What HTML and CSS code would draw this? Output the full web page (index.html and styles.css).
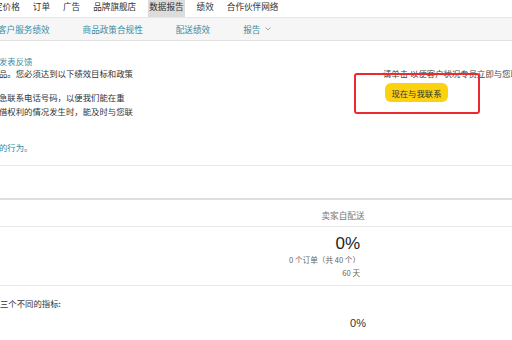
FILE: index.html
```html
<!DOCTYPE html>
<html lang="zh-CN">
<head>
<meta charset="utf-8">
<link rel="stylesheet" href="styles.css">
</head>
<body>
<nav class="topnav">
  <span>定价格</span>
  <span>订单</span>
  <span>广告</span>
  <span>品牌旗舰店</span>
  <span class="active">数据报告</span>
  <span>绩效</span>
  <span>合作伙伴网络</span>
</nav>
<nav class="subnav">
  <span>客户服务绩效</span>
  <span>商品政策合规性</span>
  <span>配送绩效</span>
  <span class="dropdown">报告
    <svg class="chev" width="6" height="4" viewBox="0 0 6 4"><path d="M0.5 0.5 L3 3 L5.5 0.5" fill="none" stroke="#999" stroke-width="0.9"/></svg>
  </span>
</nav>
<section class="main">
  <div class="left">
    <p class="link title">发表反馈</p>
    <p class="line">品。您必须达到以下绩效目标和政策</p>
    <p class="para">急联系电话号码，以便我们能在重<br>借权利的情况发生时，能及时与您联</p>
    <p class="link tail">的行为。</p>
  </div>
  <div class="right">
    <p class="hint">请单击 以便客户状况专员立即与您联系</p>
    <button class="contact">现在与我联系</button>
  </div>
  <div class="annot"></div>
</section>
<div class="filter"></div>
<div class="table">
  <div class="row head">
    <div></div>
    <div class="colhead">卖家自配送</div>
  </div>
  <div class="row vals">
    <div></div>
    <div class="valcell">
      <div class="big">0%</div>
      <div class="small">0 个订单（共 40 个）</div>
      <div class="small">60 天</div>
    </div>
  </div>
  <div class="metrics">
    <p class="mlabel">三个不同的指标:</p>
    <div class="mrow">
      <div></div>
      <div class="mval">0%</div>
    </div>
  </div>
</div>
</body>
</html>
```
FILE: styles.css
```css
html, body {
  margin: 0;
  width: 512px;
  height: 340px;
  overflow: hidden;
  background: #fff;
  font-family: "Noto Sans CJK SC", "Noto Sans", sans-serif;
  color: #333;
}
p { margin: 0; }

.topnav {
  display: flex;
  gap: 13px;
  height: 17px;
  border-bottom: 1px solid #e6e6e6;
  margin-left: -6px;
  font-size: 8.6px;
  line-height: 12px;
  white-space: nowrap;
  color: #333;
}
.topnav .active {
  background: #dcdcdc;
  margin: 0 -1px;
  padding: 0 1px;
}

.subnav {
  display: flex;
  gap: 33px;
  height: 22px;
  align-items: center;
  background: #f6f6f6;
  border-bottom: 1px solid #e2e2e2;
  margin-left: -2px;
  font-size: 8.6px;
  line-height: 12px;
  color: #3b8da3;
  white-space: nowrap;
}
.dropdown { display: flex; align-items: center; gap: 5px; }
.chev { display: block; }

.main {
  position: relative;
  display: flex;
  height: 124px;
  font-size: 8.4px;
  white-space: nowrap;
}
.left {
  width: 384px;
  flex: none;
  padding-top: 14px;
  line-height: 12px;
  margin-left: -1px;
}
.link { color: #3b8da3; }
.para { margin-top: 11px; line-height: 14px; }
.tail { margin-top: 23px; }

.right {
  flex: 1;
  overflow: hidden;
  padding-top: 26px;
}
.hint { line-height: 12px; color: #444; }
.contact {
  display: flex;
  align-items: center;
  justify-content: center;
  margin: 4px 0 0 2px;
  width: 63px;
  height: 19px;
  padding: 0;
  border: none;
  border-radius: 6px;
  background: #fcd20e;
  font-family: inherit;
  font-size: 8.4px;
  color: #333;
}
.annot {
  position: absolute;
  left: 354px;
  top: 32px;
  width: 126px;
  height: 41px;
  box-sizing: border-box;
  border: 2px solid #ea2a30;
  border-radius: 3px;
}

.filter {
  height: 32px;
  border-top: 1px solid #e8e8e8;
  border-bottom: 2px solid #dedede;
}

.row {
  display: grid;
  grid-template-columns: 280px 126px 1fr;
  border-bottom: 1px solid #e8e8e8;
}
.head { height: 26px; align-items: center; }
.colhead {
  text-align: center;
  font-size: 8.6px;
  color: #777;
  padding-top: 3px;
}
.vals { height: 58px; }
.valcell {
  text-align: right;
  padding: 8px 46px 0 0;
  white-space: nowrap;
}
.big {
  font-family: "Liberation Sans", "Noto Sans CJK SC", sans-serif;
  font-size: 17px;
  line-height: 18px;
  color: #222;
}
.small {
  font-size: 7.6px;
  line-height: 13px;
  color: #666;
}
.small:first-of-type { margin-right: 2px; }

.metrics { padding-top: 11px; }
.mlabel { font-size: 8.4px; line-height: 12px; color: #333; }
.mrow {
  display: grid;
  grid-template-columns: 280px 126px 1fr;
  margin-top: 7px;
}
.mval {
  text-align: right;
  padding-right: 40px;
  font-family: "Liberation Sans", "Noto Sans CJK SC", sans-serif;
  font-size: 11px;
  line-height: 14px;
  color: #333;
}
```
